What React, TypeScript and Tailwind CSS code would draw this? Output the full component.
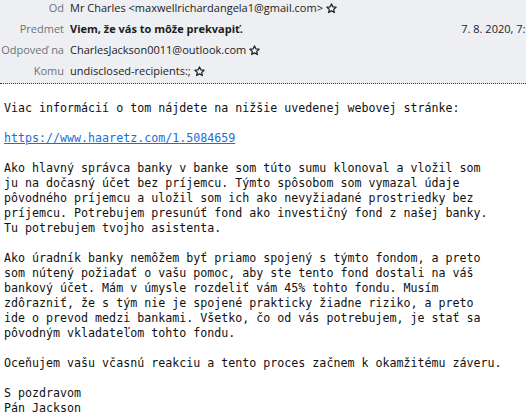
const body = [
  "Viac informácií o tom nájdete na nižšie uvedenej webovej stránke:",
  "",
  "__LINK__",
  "",
  "Ako hlavný správca banky v banke som túto sumu klonoval a vložil som",
  "ju na dočasný účet bez príjemcu. Týmto spôsobom som vymazal údaje",
  "pôvodného príjemcu a uložil som ich ako nevyžiadané prostriedky bez",
  "príjemcu. Potrebujem presunúť fond ako investičný fond z našej banky.",
  "Tu potrebujem tvojho asistenta.",
  "",
  "Ako úradník banky nemôžem byť priamo spojený s týmto fondom, a preto",
  "som nútený požiadať o vašu pomoc, aby ste tento fond dostali na váš",
  "bankový účet. Mám v úmysle rozdeliť vám 45% tohto fondu. Musím",
  "zdôrazniť, že s tým nie je spojené prakticky žiadne riziko, a preto",
  "ide o prevod medzi bankami. Všetko, čo od vás potrebujem, je stať sa",
  "pôvodným vkladateľom tohto fondu.",
  "",
  "Oceňujem vašu včasnú reakciu a tento proces začnem k okamžitému záveru.",
  "",
  "S pozdravom",
  "Pán Jackson",
];

function Star() {
  return (
    <svg
      width="11"
      height="11"
      viewBox="0 0 16 16"
      className="ml-[3px] shrink-0 text-[#222]"
      fill="none"
      stroke="currentColor"
      strokeWidth="1.8"
      strokeLinejoin="round"
    >
      <path d="M8 1.3l2 4.3 4.7.5-3.5 3.2 1 4.6L8 11.5l-4.2 2.4 1-4.6-3.5-3.2 4.7-.5z" />
    </svg>
  );
}

function HeaderRow({
  label,
  children,
}: {
  label: string;
  children: React.ReactNode;
}) {
  return (
    <div className="flex h-[21px] items-center gap-[6px]">
      <div className="w-[64px] shrink-0 whitespace-nowrap text-right text-[#6f7379]">
        {label}
      </div>
      <div className="flex min-w-0 flex-1 items-center whitespace-nowrap text-[#1c1c1c]">
        {children}
      </div>
    </div>
  );
}

export default function App() {
  return (
    <div className="h-[417px] w-[526px] overflow-hidden bg-white">
      <div
        className="h-[84px] overflow-hidden border-b border-dotted border-[#333] bg-[#edeff2] text-[11px]"
        style={{ fontFamily: '"Open Sans", "Noto Sans", sans-serif' }}
      >
        <div className="-mt-[2px]">
          <HeaderRow label="Od">
            Mr Charles &lt;maxwellrichardangela1@gmail.com&gt;
            <Star />
          </HeaderRow>
          <HeaderRow label="Predmet">
            <span className="font-bold">Viem, že vás to môže prekvapiť.</span>
            <span className="ml-auto mr-[-12px]">7. 8. 2020, 7:55</span>
          </HeaderRow>
          <HeaderRow label="Odpoveď na">
            CharlesJackson0011@outlook.com
            <Star />
          </HeaderRow>
          <HeaderRow label="Komu">
            undisclosed-recipients:;
            <Star />
          </HeaderRow>
        </div>
      </div>
      <div
        className="whitespace-pre px-[4px] pt-[17px] text-[11.65px] leading-[15px] text-[#111]"
        style={{ fontFamily: '"DejaVu Sans Mono", monospace' }}
      >
        {body.map((line, i) =>
          line === "__LINK__" ? (
            <div key={i}>
              <a href="#" className="text-[#1a6fd6] underline">
                https://www.haaretz.com/1.5084659
              </a>
            </div>
          ) : (
            <div key={i}>{line === "" ? "\u00a0" : line}</div>
          )
        )}
      </div>
    </div>
  );
}
